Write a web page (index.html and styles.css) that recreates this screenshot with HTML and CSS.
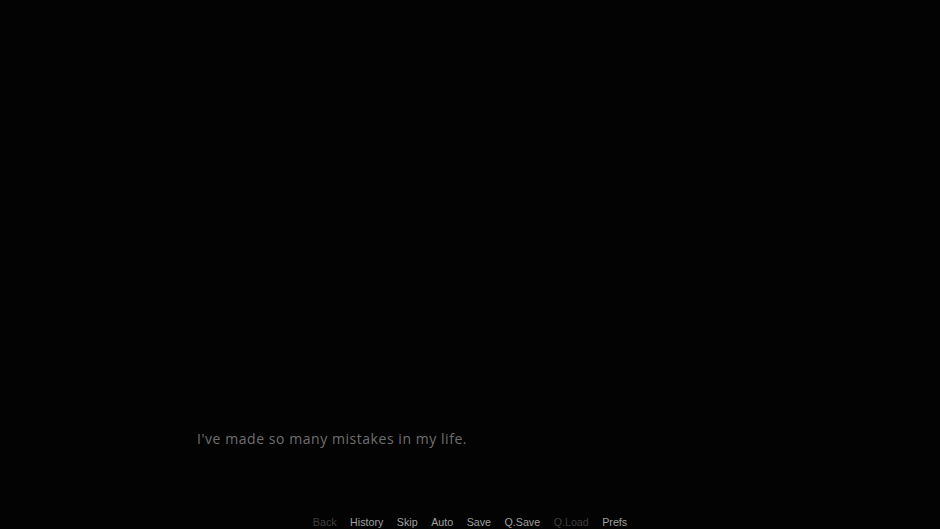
FILE: index.html
```html
<!DOCTYPE html>
<html>
<head>
<meta charset="utf-8">
<link rel="stylesheet" href="styles.css">
</head>
<body>
<div class="screen">
  <div class="dialogue">
    <p class="line">I've made so many mistakes in my life.</p>
  </div>
  <nav class="quick-menu">
    <span class="qm disabled">Back</span>
    <span class="qm">History</span>
    <span class="qm">Skip</span>
    <span class="qm">Auto</span>
    <span class="qm">Save</span>
    <span class="qm">Q.Save</span>
    <span class="qm disabled">Q.Load</span>
    <span class="qm">Prefs</span>
  </nav>
</div>
</body>
</html>
```
FILE: styles.css
```css
html, body {
  margin: 0;
  padding: 0;
  background: #030303;
}
.screen {
  width: 940px;
  height: 529px;
  display: flex;
  flex-direction: column;
  justify-content: flex-end;
  overflow: hidden;
}
.dialogue {
  height: 83px;
  padding-left: 197px;
}
.line {
  margin: 0;
  font-family: "Open Sans", "DejaVu Sans", sans-serif;
  font-size: 14px;
  letter-spacing: 0.55px;
  color: #6f6f6f;
  line-height: 20px;
}
.quick-menu {
  display: flex;
  justify-content: center;
  gap: 13.5px;
  height: 14px;
  padding-top: 3px;
}
.qm {
  font-family: "Liberation Sans", Arial, sans-serif;
  font-size: 10.7px;
  line-height: 14px;
  color: #a0a0a0;
}
.qm.disabled {
  color: #3f3f3f;
}
```
